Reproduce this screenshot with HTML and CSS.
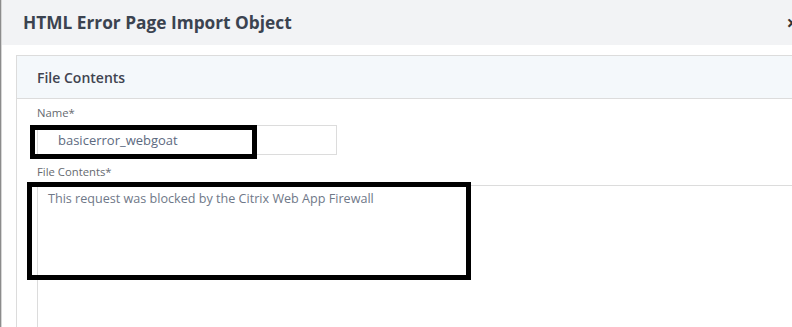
FILE: index.html
```html
<!DOCTYPE html>
<html lang="en">
<head>
    <meta charset="UTF-8">
    <meta name="viewport" content="width=device-width, initial-scale=1.0">
    <title>HTML Error Page Import Object</title>
    <link rel="stylesheet" href="styles.css">
</head>
<body>
    <div class="modal">
        <div class="modal-header">
            <h2 class="modal-title">HTML Error Page Import Object</h2>
            <span class="close-btn">&times;</span>
        </div>

        <div class="modal-body">
            <div class="panel">
                <div class="panel-heading">File Contents</div>
                <div class="panel-body">
                    <label class="field-label">Name*</label>
                    <div class="text-input">basicerror_webgoat</div>

                    <label class="field-label label-gap">File Contents*</label>
                    <div class="text-area">This request was blocked by the Citrix Web App Firewall</div>
                </div>
            </div>
        </div>

        <!-- highlight marks drawn over the form -->
        <div class="mark mark-name"></div>
        <div class="mark mark-contents"></div>
    </div>
</body>
</html>
```

FILE: styles.css
```css
body {
    margin: 0;
    overflow: hidden;
    font-family: "Open Sans", Arial, sans-serif;
    background-color: #fff;
}
.modal {
    position: relative;
    height: 327px;
    overflow: hidden;
    border-left: 1px solid #8c8c8c;
    box-shadow: inset 1px 0 0 #d6d6d6;
}
.modal-header {
    height: 45px;
    margin-left: 1px;
    padding-left: 21px;
    display: flex;
    align-items: center;
    justify-content: space-between;
    background-color: #f2f3f5;
}
.modal-title {
    margin: 0;
    font-size: 17.3px;
    font-weight: 700;
    color: #3b4350;
}
.close-btn {
    margin-right: -6px;
    font-size: 20px;
    font-weight: 700;
    color: #333;
    line-height: 1;
}
.modal-body {
    padding: 10px 0 0 15px;
}
.panel {
    height: 271px;
    border: 1px solid #dcdcdc;
    border-right: none;
    border-bottom: none;
}
.panel-heading {
    height: 42px;
    padding-left: 20px;
    display: flex;
    align-items: center;
    background-color: #f4f8fb;
    border-bottom: 1px solid #dcdcdc;
    font-size: 14px;
    font-weight: 600;
    color: #3f4450;
}
.panel-body {
    padding: 6px 0 0 20px;
}
.field-label {
    display: block;
    font-size: 11.3px;
    line-height: 16px;
    color: #666a70;
}
.label-gap {
    margin-top: 9px;
}
.text-input {
    margin-top: 4px;
    width: 278px;
    height: 28px;
    padding-left: 20px;
    border: 1px solid #dcdcdc;
    font-size: 13px;
    line-height: 28px;
    color: #5d6a80;
}
.text-area {
    margin-top: 5px;
    height: 137px;
    padding: 4px 0 0 10px;
    border-top: 1px solid #dcdcdc;
    border-left: 1px solid #dcdcdc;
    font-size: 12.6px;
    line-height: 18px;
    color: #6f7888;
}
.mark {
    position: absolute;
    border: 5px solid #000;
}
.mark-name {
    left: 29px;
    top: 125px;
    width: 217px;
    height: 24px;
}
.mark-contents {
    left: 26px;
    top: 182px;
    width: 434px;
    height: 88px;
}
```
